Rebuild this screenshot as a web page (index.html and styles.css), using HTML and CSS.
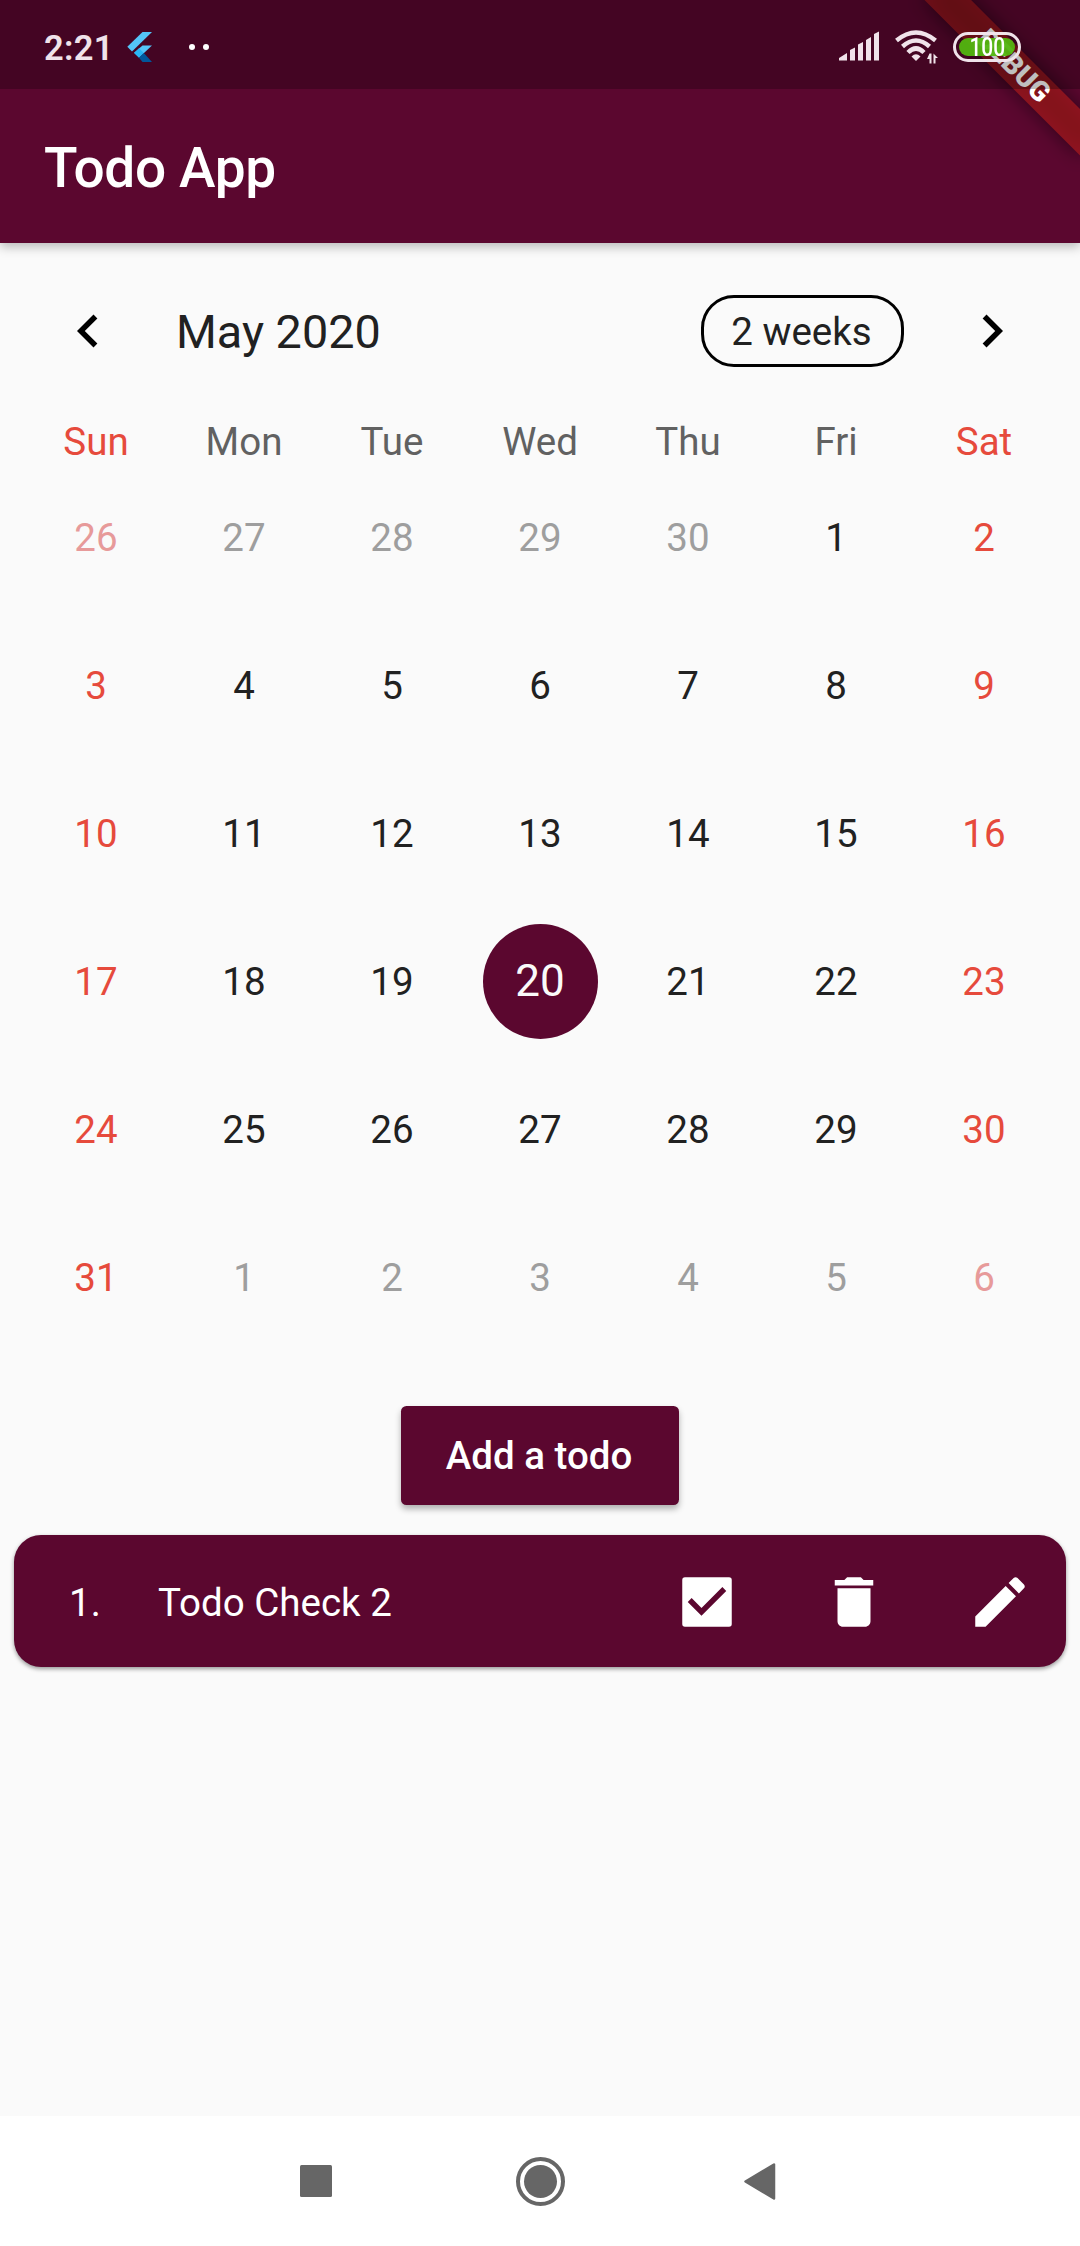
FILE: index.html
```html
<!DOCTYPE html>
<html lang="en">
<head>
<meta charset="utf-8">
<title>Todo App</title>
<link rel="stylesheet" href="styles.css">
</head>
<body>
<div class="screen">
  <header class="top">
    <svg class="ribbon" width="240" height="240" viewBox="0 0 240 240">
      <defs><filter id="soft" x="-30%" y="-150%" width="160%" height="400%"><feGaussianBlur stdDeviation="10"/></filter></defs>
      <g transform="translate(240 0) rotate(45)">
        <rect x="-110" y="77" width="220" height="33" fill="#000" fill-opacity=".5" filter="url(#soft)"/>
        <rect x="-112" y="77" width="224" height="33" fill="#b71c1c" fill-opacity=".627"/>
        <text class="ribbon-text" x="0" y="102.500" text-anchor="middle">DEBUG</text>
      </g>
    </svg>
    <div class="status">
      <span class="clock">2:21</span>
      <svg class="flutter" width="26" height="32" viewBox="0 0 26 32">
        <path d="M15.500 1H25L5 20.500 0.300 15.700z" fill="#54c5f8"/>
        <path d="M15.500 14.500H25L17 22l-5 4.600-5-4.800z" fill="#54c5f8"/>
        <path d="M12 17.200l4.800 4.700-4.800 4.800-4.800-4.800z" fill="#29b6f6"/>
        <path d="M12 26.700l4.800-4.800L25 31H15.500z" fill="#01579b"/>
      </svg>
      <span class="dots"><i></i><i></i></span>
      <svg class="signal" width="42" height="32" viewBox="0 0 42 32">
        <path d="M0 29.500V27L8 22V29.500zM11 29.500V19L16 16.500V29.500zM19 29.500V13.500L24 11V29.500zM27 29.500V9L32 6V29.500zM35 29.500V3L40 .5V29.500z" fill="#f0e3ea"/>
      </svg>
      <svg class="wifi" width="44" height="34" viewBox="0 0 44 34">
        <g fill="none" stroke="#f0e3ea" stroke-width="4.500">
          <path d="M1.500 10.500Q21 -5.500 40.500 10.500"/>
          <path d="M7.500 16.500Q21 4.500 34.500 16.500"/>
          <path d="M13 22.500Q21 14.500 29 22.500"/>
        </g>
        <path d="M16.500 26.500Q21 22 25.500 26.500L21 31z" fill="#f0e3ea"/>
        <path d="M34.500 23.500h2v10h-2V29H32zM38.500 23.500L43 28H40.500V33.500H38.500z" fill="#f0e3ea"/>
      </svg>
      <span class="battery"><span class="charge"><span class="level">100</span></span></span>
    </div>
    <h1 class="title">Todo App</h1>
  </header>

  <section class="calendar">
    <div class="cal-head">
      <svg class="icon" viewBox="0 0 24 24"><path d="M15.410 7.410L14 6l-6 6 6 6 1.410-1.410L10.830 12z"/></svg>
      <span class="month">May 2020</span>
      <button class="format">2 weeks</button>
      <svg class="icon" viewBox="0 0 24 24"><path d="M10 6L8.590 7.410 13.170 12l-4.580 4.590L10 18l6-6z"/></svg>
    </div>
    <div class="week names"><span>Sun</span><span>Mon</span><span>Tue</span><span>Wed</span><span>Thu</span><span>Fri</span><span>Sat</span></div>
    <div class="week"><span class="out">26</span><span class="out">27</span><span class="out">28</span><span class="out">29</span><span class="out">30</span><span>1</span><span>2</span></div>
    <div class="week"><span>3</span><span>4</span><span>5</span><span>6</span><span>7</span><span>8</span><span>9</span></div>
    <div class="week"><span>10</span><span>11</span><span>12</span><span>13</span><span>14</span><span>15</span><span>16</span></div>
    <div class="week"><span>17</span><span>18</span><span>19</span><span><b class="selected">20</b></span><span>21</span><span>22</span><span>23</span></div>
    <div class="week"><span>24</span><span>25</span><span>26</span><span>27</span><span>28</span><span>29</span><span>30</span></div>
    <div class="week"><span>31</span><span class="out">1</span><span class="out">2</span><span class="out">3</span><span class="out">4</span><span class="out">5</span><span class="out">6</span></div>
  </section>

  <button class="add">Add a todo</button>

  <div class="todo">
    <span class="num">1.</span>
    <span class="text">Todo Check 2</span>
    <div class="actions">
      <svg class="icon" viewBox="0 0 24 24"><path fill-rule="evenodd" d="M4 3h16a1 1 0 0 1 1 1v16a1 1 0 0 1-1 1H4a1 1 0 0 1-1-1V4a1 1 0 0 1 1-1zM10 17l9-9-1.410-1.410L10 14.170l-3.590-3.580L5 12z"/></svg>
      <svg class="icon" viewBox="0 0 24 24"><path d="M6 19c0 1.100.9 2 2 2h8c1.100 0 2-.9 2-2V7H6v12zM19 4h-3.500l-1-1h-5l-1 1H5v2h14V4z"/></svg>
      <svg class="icon" viewBox="0 0 24 24"><path d="M3 17.250V21h3.750L17.810 9.940l-3.750-3.750L3 17.250zM20.710 7.040c.39-.39.39-1.020 0-1.410l-2.340-2.340c-.39-.39-1.020-.39-1.410 0l-1.830 1.830 3.750 3.750 1.830-1.830z"/></svg>
    </div>
  </div>

  <nav class="nav">
    <svg width="32" height="32" viewBox="0 0 32 32"><rect width="32" height="32" rx="1.500" fill="#666"/></svg>
    <svg class="home" width="49" height="49" viewBox="0 0 49 49"><circle cx="24.500" cy="24.500" r="22.500" fill="none" stroke="#666" stroke-width="4"/><circle cx="24.500" cy="24.500" r="16.500" fill="#666"/></svg>
    <svg width="32" height="37" viewBox="0 0 32 37"><path d="M30 1.500V35.500L1.500 18.500z" fill="#666" stroke="#666" stroke-width="2.500" stroke-linejoin="round"/></svg>
  </nav>
</div>
</body>
</html>
```
FILE: styles.css
```css
* { box-sizing: border-box; }
body { margin: 0; font-family: Roboto, sans-serif; background: #fafafa; }
.screen { width: 1080px; height: 2246px; overflow: hidden; display: flex; flex-direction: column; }
button { font: inherit; padding: 0; }

.top { position: relative; height: 243px; background: #5b072f; box-shadow: 0 4px 10px rgba(0,0,0,.26); flex: none; }
.status { position: relative; height: 89px; background: rgba(0,0,0,.25); display: flex; align-items: center; padding: 5px 59px 0 44px; }
.clock { color: #f0e3ea; font-size: 34.500px; font-weight: 600; letter-spacing: .3px; width: 83px; padding-top: 1px; }
.flutter { display: block; }
.dots { display: flex; gap: 8px; margin-left: 36px; flex: 1; }
.dots i { width: 6px; height: 6px; border-radius: 50%; background: #fff; }
.signal { margin-right: 14px; }
.wifi { margin-right: 14px; }
.battery { width: 68px; height: 30px; border: 3px solid #f0e3ea; border-radius: 15px; padding: 3px; }
.charge { display: flex; align-items: center; justify-content: center; height: 18px; border-radius: 9px; background: rgba(83,184,16,.94); color: #fff; font-size: 25px; font-weight: 500; }
.level { transform: scaleX(.84); }
.title { margin: 0; padding-left: 44px; font-size: 55px; font-weight: 500; line-height: 159px; letter-spacing: -.35px; color: #fff; }
/* sits under the translucent status bar */
.ribbon { position: absolute; top: 0; right: 0; }
.ribbon-text { font-size: 28px; font-weight: 900; fill: #fff; }

.calendar { padding: 0 22px; color: #212121; font-size: 38.500px; }
.cal-head { display: flex; align-items: center; height: 132px; margin: 22px 33px 0; }
.icon { width: 66px; height: 66px; display: block; }
.month { flex: 1; margin-left: 55px; padding-top: 1px; font-size: 46.750px; }
.format { width: 203px; height: 72px; margin-right: 55px; padding-right: 2px; border: 3px solid #000; border-radius: 33px; background: none; color: #212121; }
.week { display: grid; grid-template-columns: repeat(7, 148px); height: 148px; }
.week span { display: flex; align-items: center; justify-content: center; }
.week span:first-child, .week span:last-child { color: #e64a3c; }
.week .out { color: #9e9e9e; }
.week .out:first-child, .week .out:last-child { color: #e79a9a; }
.names { height: 66px; color: #616161; padding-top: 22px; }
.selected { display: flex; align-items: center; justify-content: center; width: 115px; height: 115px; border-radius: 50%; background: #5b072f; color: #fafafa; font-size: 44px; font-weight: 400; }

.add { align-self: center; margin-top: 55px; width: 278px; height: 99px; padding-right: 2px; border: 0; border-radius: 5.500px; background: #5b072f; color: #fff; font-size: 38.500px; font-weight: 500; box-shadow: 0 4px 6px rgba(0,0,0,.3); flex: none; }
.todo { margin: 30px 14px 0; height: 132px; border-radius: 27px; background: #5b072f; color: #fff; font-size: 38.500px; display: flex; align-items: center; padding: 2px 33px 0 55px; box-shadow: 0 2px 4px rgba(0,0,0,.4); flex: none; }
.num { width: 89px; }
.text { flex: 1; }
.actions { display: flex; gap: 80.500px; }
.actions .icon { fill: #fff; }

.nav { margin-top: auto; height: 130px; background: #fff; display: flex; align-items: center; justify-content: space-between; padding: 0 304px 0 300px; }
.home { margin-left: 4px; }
```
